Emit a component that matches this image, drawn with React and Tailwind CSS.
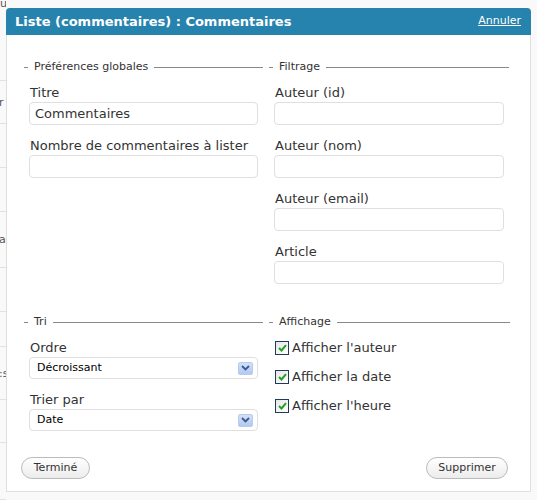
import React from 'react'

const font = { fontFamily: '"DejaVu Sans", Verdana, sans-serif' }

function Legend({ label }) {
  return (
    <div className="flex items-center h-[14px] text-[11px] text-[#333]">
      <span className="w-[4px] h-px bg-[#888]" />
      <span className="ml-[6px] mr-[6px]">{label}</span>
      <span className="flex-1 h-px bg-[#888]" />
    </div>
  )
}

function Field({ label, value = '', first }) {
  return (
    <div className={first ? 'mt-[11px] pl-[5px] pr-[5px]' : 'mt-[13px] pl-[5px] pr-[5px]'}>
      <div className="text-[13px] leading-[16px] text-[#333] pl-[1px]">{label}</div>
      <div className="mt-px h-[23px] border border-[#dfdfdf] rounded-[4px] bg-white flex items-center px-[5px] text-[13px] text-[#333]">
        {value}
      </div>
    </div>
  )
}

function Select({ label, value, first }) {
  return (
    <div className={first ? 'mt-[11px] pl-[5px] pr-[5px]' : 'mt-[13px] pl-[5px] pr-[5px]'}>
      <div className="text-[13px] leading-[16px] text-[#333] pl-[1px]">{label}</div>
      <div className="mt-px h-[22px] border border-[#dfdfdf] rounded-[4px] bg-white flex items-center justify-between pl-[7px] pr-[4px] text-[11px] text-black">
        <span>{value}</span>
        <span className="w-[15px] h-[13px] rounded-[2px] bg-gradient-to-b from-[#d2e0fa] to-[#b2c9f2] border border-[#b8cbee] flex items-center justify-center">
          <svg width="9" height="6" viewBox="0 0 9 6">
            <path d="M1 1 L4.5 4.5 L8 1" fill="none" stroke="#3b5a8c" strokeWidth="1.8" />
          </svg>
        </span>
      </div>
    </div>
  )
}

function Check({ label, first }) {
  return (
    <div className={`flex items-center pl-[6px] h-[16px] ${first ? 'mt-[11px]' : 'mt-[13px]'}`}>
      <span className="w-[14px] h-[14px] border border-[#1e3a5f] bg-gradient-to-br from-[#e6e6e6] to-white flex items-center justify-center">
        <svg width="9" height="8" viewBox="0 0 9 8">
          <path d="M1 4 L3.5 6.5 L8 1.2" fill="none" stroke="#22a022" strokeWidth="2" />
        </svg>
      </span>
      <span className="ml-[3px] text-[13px] leading-[16px] text-[#333]">{label}</span>
    </div>
  )
}

function Button({ children, className = '' }) {
  return (
    <button className={`h-[22px] rounded-full border border-[#bbb] bg-gradient-to-b from-white to-[#ececec] text-[11px] text-[#333] ${className}`}>
      {children}
    </button>
  )
}

export default function App() {
  // rows of the page lying under the dialog
  const stripRows = [
    { h: 81 }, { h: 43, t: 'r' }, { h: 44 }, { h: 44 }, { h: 56, t: 'a' },
    { h: 44 }, { h: 35 }, { h: 53, t: ':s' }, { h: 43 }, { h: 57 },
  ]

  return (
    <div style={font} className="w-[537px] h-[500px] bg-[#f9f9f9] flex overflow-hidden">
      {/* page behind the dialog */}
      <div className="w-[6px] shrink-0 relative text-[11px] text-[#555] overflow-hidden">
        <div className="absolute top-[-2px] left-[0px] leading-[12px]">ug</div>
        {stripRows.map((r, i) => (
          <div
            key={i}
            style={{ height: r.h }}
            className="border-b border-[#e2e2e2] flex items-center leading-none"
          >
            {r.t && <span className="ml-[-1px]">{r.t}</span>}
          </div>
        ))}
      </div>

      {/* dialog */}
      <div className="mt-[8px] w-[525px] shrink-0 flex flex-col">
        <div className="h-[27px] rounded-t-[4px] bg-[#2683ae] flex items-center justify-between pl-[9px] pr-[10px]">
          <span className="text-white font-bold text-[13px]">Liste (commentaires) : Commentaires</span>
          <span className="text-white text-[11px] underline">Annuler</span>
        </div>
        <div className="h-[457px] bg-white border border-t-0 border-[#dfdfdf] pl-[17px] pr-[19px] pt-[25px] flex flex-col">
          <div className="grid grid-cols-[239px_241px] gap-x-[6px]">
            <div>
              <Legend label="Préférences globales" />
              <Field label="Titre" value="Commentaires" first />
              <Field label="Nombre de commentaires à lister" />
            </div>
            <div className="pr-px">
              <Legend label="Filtrage" />
              <Field label="Auteur (id)" first />
              <Field label="Auteur (nom)" />
              <Field label="Auteur (email)" />
              <Field label="Article" />
            </div>
            <div className="mt-[31px]">
              <Legend label="Tri" />
              <Select label="Ordre" value="Décroissant" first />
              <Select label="Trier par" value="Date" />
            </div>
            <div className="mt-[31px]">
              <Legend label="Affichage" />
              <Check label="Afficher l'auteur" first />
              <Check label="Afficher la date" />
              <Check label="Afficher l'heure" />
            </div>
          </div>
          <div className="mt-[26px] flex justify-between ml-[-3px] mr-[3px]">
            <Button className="w-[69px]">Terminé</Button>
            <Button className="w-[82px]">Supprimer</Button>
          </div>
        </div>
      </div>
    </div>
  )
}
